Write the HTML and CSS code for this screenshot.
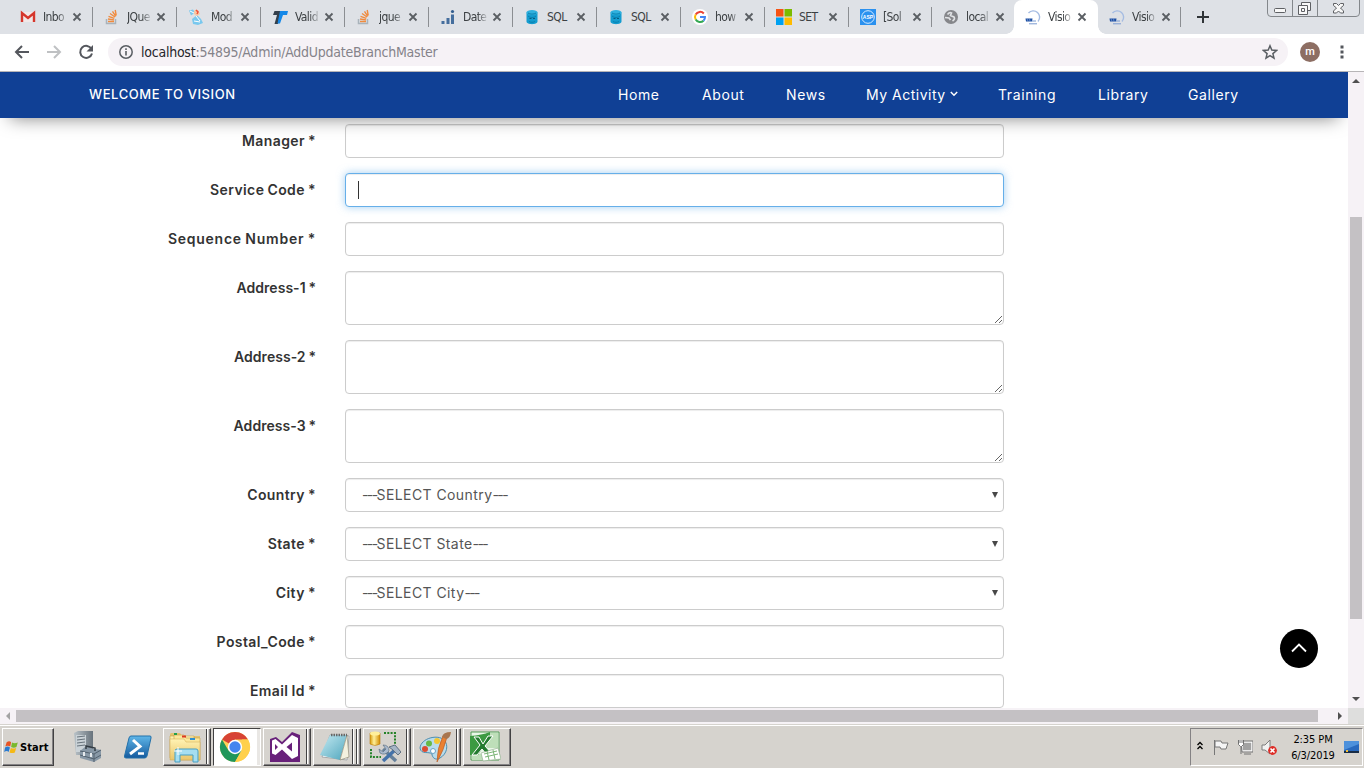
FILE: index.html
```
<!DOCTYPE html>
<html lang="en">
<head>
<meta charset="utf-8">
<title>Vision</title>
<link rel="stylesheet" href="styles.css">
</head>
<body>
<svg class="defs" aria-hidden="true">
  <defs>
    <linearGradient id="sky" x1="0" y1="0" x2="0" y2="1"><stop offset="0" stop-color="#5fb6e8"/><stop offset="1" stop-color="#145a9e"/></linearGradient>
    <linearGradient id="paper" x1="0" y1="0" x2="1" y2="1"><stop offset="0" stop-color="#c5eaf2"/><stop offset="1" stop-color="#4fa6bd"/></linearGradient>
    <linearGradient id="folder" x1="0" y1="0" x2="0" y2="1"><stop offset="0" stop-color="#fff3b4"/><stop offset="1" stop-color="#e9c56a"/></linearGradient>
    <linearGradient id="gold" x1="0" y1="0" x2="1" y2="0"><stop offset="0" stop-color="#d79a09"/><stop offset=".4" stop-color="#fff09a"/><stop offset="1" stop-color="#d38d00"/></linearGradient>
    <linearGradient id="metal" x1="0" y1="0" x2="1" y2="0"><stop offset="0" stop-color="#b9c2c8"/><stop offset="1" stop-color="#68737c"/></linearGradient>
  </defs>
  <symbol id="x" viewBox="0 0 10 10"><path d="M1.500 1.500l7 7m0-7l-7 7" stroke="#5a5e63" stroke-width="1.800" fill="none"/></symbol>
  <symbol id="stack" viewBox="0 0 16 16"><path d="M2.500 10v4.500h9V10" fill="none" stroke="#a9b3bb" stroke-width="1.500"/><path d="M4 12.500h6M4 10l6 .9M4.500 7.300l5.800 2M6 4.500l5 3.500M8.500 2.300l3.300 5M11.200 1l1 5.500" stroke="#f08b3e" stroke-width="1.400" fill="none"/></symbol>
  <symbol id="db" viewBox="0 0 16 16"><path d="M2.500 3.500v9c0 3.500 11 3.500 11 0v-9z" fill="#149ccf"/><ellipse cx="8" cy="3.500" rx="5.500" ry="2.600" fill="#2fb0de"/><path d="M4 4c2 1.500 6 1.500 8 0M4 7c2 2 6 2 8 0M5 12.500c2 1 4 1 6 0" stroke="#087fae" fill="none"/><path d="M5.500 9.500h2m1.500 0h2" stroke="#065a80"/></symbol>
  <symbol id="vision" viewBox="0 0 16 16"><path d="M3.500 4A6.300 6.300 0 1 1 13 12.500" fill="none" stroke="#a5bce2" stroke-width="1.400"/><path d="M.5 9.500h7l-.5 3H1z" fill="#1c4fa3"/><path d="M2 9.500l1 3m1.500-3l.5 3" stroke="#94aedb" stroke-width=".6"/><path d="M7 12h4M4 14.800h8" stroke="#7b9bd1"/></symbol>
</svg>

<header class="tabstrip">
  <div class="tab"><svg class="fav" viewBox="0 0 16 16"><path d="M1 3h14v10H1z" fill="#f1e8e8"/><path d="M2 13V4l6 5 6-5v9" fill="none" stroke="#d5362c" stroke-width="2.400"/></svg><span class="tab-title">Inbo</span><svg class="close"><use href="#x"/></svg></div>
  <div class="tab"><svg class="fav"><use href="#stack"/></svg><span class="tab-title">JQue</span><svg class="close"><use href="#x"/></svg></div>
  <div class="tab"><svg class="fav" viewBox="0 0 16 16"><path d="M1 1.500l4-1 2 3-4 3zM4 10l5-4 4 4 2 4-5 2-5-1z" fill="#79c8ee"/><path d="M2 2l4 2M6 12l6 1M8 7l4 5" stroke="#fff"/><path d="M6 3c0-3 5-3 5 0l1 2-3 2-3-2z" fill="#f8c8a2"/><path d="M8 1l2 2-1 2" stroke="#ed513f" stroke-width="1.500" fill="none"/></svg><span class="tab-title">Mod</span><svg class="close"><use href="#x"/></svg></div>
  <div class="tab"><svg class="fav" viewBox="0 0 16 16"><path d="M2.500 2h7l-3.500 13H2.500L5 6H1z" fill="#333f4b"/><path d="M8 2h8l-1 4h-4l-3 8.500H5.500z" fill="#1588e8"/></svg><span class="tab-title">Valid</span><svg class="close"><use href="#x"/></svg></div>
  <div class="tab"><svg class="fav"><use href="#stack"/></svg><span class="tab-title">jque</span><svg class="close"><use href="#x"/></svg></div>
  <div class="tab"><svg class="fav" viewBox="0 0 16 16"><path d="M1.500 12h3v3h-3zM6.500 9h3v6h-3zM11 5.500h3V15h-3z" fill="#456e9d"/><circle cx="12.500" cy="2.500" r="1.600" fill="#315c8e"/></svg><span class="tab-title">Date</span><svg class="close"><use href="#x"/></svg></div>
  <div class="tab"><svg class="fav"><use href="#db"/></svg><span class="tab-title solid">SQL</span><svg class="close"><use href="#x"/></svg></div>
  <div class="tab"><svg class="fav"><use href="#db"/></svg><span class="tab-title solid">SQL</span><svg class="close"><use href="#x"/></svg></div>
  <div class="tab"><svg class="fav" viewBox="0 0 16 16"><circle cx="8" cy="8" r="8" fill="#fff"/><g fill="none" stroke-width="2"><path d="M11.800 4.500A5 5 0 0 0 3.700 5.500" stroke="#ea4335"/><path d="M3.700 5.500a5 5 0 0 0 0 5" stroke="#fbbc05"/><path d="M3.700 10.500a5 5 0 0 0 7.800 1.200" stroke="#34a853"/><path d="M11.500 11.700A5 5 0 0 0 13 8H8" stroke="#4285f4"/></g></svg><span class="tab-title">how</span><svg class="close"><use href="#x"/></svg></div>
  <div class="tab"><svg class="fav" viewBox="0 0 16 16"><path d="M0 0h7.500v7.500H0z" fill="#f65314"/><path d="M8.500 0H16v7.500H8.500z" fill="#7cbb00"/><path d="M0 8.500h7.500V16H0z" fill="#00a1f1"/><path d="M8.500 8.500H16V16H8.500z" fill="#ffbb00"/></svg><span class="tab-title solid">SET</span><svg class="close"><use href="#x"/></svg></div>
  <div class="tab w83"><svg class="fav" viewBox="0 0 16 16"><path d="M0 0h16v16H0z" fill="#2b91ef"/><circle cx="8" cy="8" r="6.300" fill="none" stroke="#d8ecff"/><text x="8" y="10" class="asp">ASP</text></svg><span class="tab-title">[Sol</span><svg class="close"><use href="#x"/></svg></div>
  <div class="tab w82"><svg class="fav" viewBox="0 0 16 16"><circle cx="8" cy="8" r="7" fill="#85868a"/><path d="M4.500 5.500q2-2.500 4-1.500l-1 2.500 3.500 1.500q1.500 2-1.500 4M2 8.500l4 .5 1.500 2" fill="none" stroke="#e0e2e5" stroke-width="1.700"/></svg><span class="tab-title">local</span><svg class="close"><use href="#x"/></svg></div>
  <div class="tab active"><svg class="fav"><use href="#vision"/></svg><span class="tab-title">Visio</span><svg class="close"><use href="#x"/></svg></div>
  <div class="tab w83"><svg class="fav"><use href="#vision"/></svg><span class="tab-title">Visio</span><svg class="close"><use href="#x"/></svg></div>
  <svg class="plus" viewBox="0 0 12 12"><path d="M6 0v12M0 6h12" stroke="#303438" stroke-width="2"/></svg>
  <svg class="window-buttons" viewBox="0 0 94 17"><path d="M.5 0v13q0 3.500 3.500 3.500h85q3.500 0 3.500-3.500V0M25.500 0v16M50.500 0v16" fill="none" stroke="#83878b"/><g fill="#f8f8f8" stroke="#5e6064"><rect x="7.500" y="8.500" width="11" height="4" rx="1"/><path d="M34.500 2.500h9v8h-9z"/><path d="M31.500 5.500h9v9h-9zM34.500 8.500h3v3h-3z"/><path d="M66.500 3.500h3l2 2 2-2h3v2l-3 2.500 3 3v2h-3l-2-2-2 2h-3v-2l3-3-3-2.500z"/></g></svg>
</header>

<div class="toolbar">
  <svg class="tool" viewBox="0 0 16 16"><path d="M15 8H2m6-6L2 8l6 6" stroke="#54575d" stroke-width="2" fill="none"/></svg>
  <svg class="tool" viewBox="0 0 16 16"><path d="M1 8h13M8 2l6 6-6 6" stroke="#bfc1c3" stroke-width="2" fill="none"/></svg>
  <svg class="tool" viewBox="0 0 16 16"><path d="M13.500 5A6 6 0 1 0 14 9.500" stroke="#54575d" stroke-width="2" fill="none"/><path d="M15 1v6.500H8.500z" fill="#54575d"/></svg>
  <div class="omnibox">
    <svg class="info" viewBox="0 0 14 14"><circle cx="7" cy="7" r="6.200" fill="none" stroke="#5a5e63" stroke-width="1.500"/><path d="M7 6v4.500M7 3.300v1.700" stroke="#5a5e63" stroke-width="1.600"/></svg>
    <span class="url"><b>localhost</b>:54895/Admin/AddUpdateBranchMaster</span>
    <svg class="star" viewBox="0 0 16 16"><path d="M8 1.800l1.800 4.300 4.700.4-3.600 3.100 1.100 4.600-4-2.500-4 2.500 1.100-4.600-3.600-3.100 4.700-.4z" fill="none" stroke="#5a5e63" stroke-width="1.500"/></svg>
  </div>
  <div class="avatar">m</div>
  <svg class="dots" viewBox="0 0 4 14"><path d="M.5.5h3v3h-3zM.5 5.500h3v3h-3zM.5 10.500h3v3h-3z" fill="#54575d"/></svg>
</div>

<div class="view">
  <div class="page">
    <nav class="nav">
      <span class="brand">WELCOME TO VISION</span>
      <a class="home">Home</a><a class="about">About</a><a class="news">News</a><a class="activity">My Activity</a><svg class="caret" viewBox="0 0 8 6"><path d="M.8 1L4 4.200 7.200 1" stroke="#fff" stroke-width="1.500" fill="none"/></svg><a class="training">Training</a><a class="library">Library</a><a class="gallery">Gallery</a>
    </nav>
    <form class="form">
      <label>Manager *</label><input class="control">
      <label>Service Code *</label><div class="control focused"><i class="cursor"></i></div>
      <label class="wide">Sequence Number *</label><input class="control">
      <label class="narrow">Address-1 *</label><textarea class="control tall"></textarea>
      <label class="narrow">Address-2 *</label><textarea class="control tall"></textarea>
      <label class="narrow">Address-3 *</label><textarea class="control tall"></textarea>
      <label>Country *</label><div class="control select"><span><i class="dash">---</i>SELECT Country<i class="dash">---</i></span><i class="arrow"></i></div>
      <label>State *</label><div class="control select"><span><i class="dash">---</i>SELECT State<i class="dash">---</i></span><i class="arrow"></i></div>
      <label>City *</label><div class="control select"><span><i class="dash">---</i>SELECT City<i class="dash">---</i></span><i class="arrow"></i></div>
      <label>Postal_Code *</label><input class="control">
      <label>Email Id *</label><input class="control">
    </form>
    <div class="to-top"><svg viewBox="0 0 16 10"><path d="M1 8.500l7-7 7 7" stroke="#fff" stroke-width="1.800" fill="none"/></svg></div>
  </div>
  <div class="vscroll"><svg viewBox="0 0 8 4"><path d="M0 4l4-4 4 4z" fill="#505050"/></svg><div class="vthumb"></div><svg viewBox="0 0 8 4"><path d="M0 0l4 4 4-4z" fill="#505050"/></svg></div>
  <div class="hscroll"><svg viewBox="0 0 4 8"><path d="M4 0L0 4l4 4z" fill="#a3a3a3"/></svg><div class="hthumb"></div><svg viewBox="0 0 4 8"><path d="M0 0l4 4-4 4z" fill="#505050"/></svg></div>
  <div class="corner"></div>
</div>

<footer class="taskbar">
  <div class="start raised"><svg viewBox="0 0 18 16"><path d="M3 2q3-2 5 0L7 7Q4 5 1.500 7z" fill="#e85424"/><path d="M9 2.500q3 1.500 6.500-.2L14 7.500q-3 1.500-6 0z" fill="#79b82d"/><path d="M1.200 8q3-2 5.500 0l-1.500 5q-2-2-5 0z" fill="#2a7bd0"/><path d="M7.700 8.500q3 1.500 6 0l-1.500 5q-3 1.500-6 0z" fill="#f5b916"/></svg><span>Start</span></div>
  <div class="pin server"><svg viewBox="0 0 30 32"><path d="M1 2l4-2h15v21l-4 3H3z" fill="url(#metal)"/><path d="M3 4h10v17H3z" fill="#cad2d7"/><path d="M4 6l8-1M4 9l8-1M4 12l8-1M4 15l8-1" stroke="#66717a"/><path d="M7 20l5-4 16 3v8l-7 4-14-4z" fill="#8898a6"/><path d="M7 20l14 3 7-4M21 23v8M7 24l14 4 7-4" stroke="#52616e" fill="none"/><path d="M13 18v-3l9 2v3" fill="none" stroke="#333c44" stroke-width="1.500"/><path d="M11 21v4m7-3v4" stroke="#e6eaed" stroke-width="2"/></svg></div>
  <div class="pin shell"><svg viewBox="0 0 28 24"><path d="M7 1h19q1.500 0 1 2l-4 18q-.5 2-2.500 2H2q-2 0-1.500-2L5 3q.5-2 2-2z" fill="url(#sky)" stroke="#2370a9"/><path d="M9 5l7 6.500L6 19" fill="none" stroke="#fff" stroke-width="3"/><path d="M14 18.500h6" stroke="#fff" stroke-width="2.500"/></svg></div>
  <div class="task raised stacked"><svg viewBox="0 0 32 32"><path d="M1 3l1-1h9l2 3h18v24H1z" fill="#e3c270"/><path d="M1 5h24v22H1z" fill="url(#folder)" stroke="#c79d48" stroke-width=".6"/><path d="M5 4h10l2 3h14v22H5z" fill="#fbe79b" stroke="#c79d48" stroke-width=".6"/><path d="M1 8h14l2 3h14v18H1z" fill="url(#folder)" stroke="#cfa650" stroke-width=".5"/><path d="M5 3h3" stroke="#22a04a" stroke-width="2"/><path d="M13 5.500h4" stroke="#dd3722" stroke-width="2"/><path d="M21 8h5" stroke="#318fce" stroke-width="2"/><path d="M6 31V20q0-2 2-2h19q2 0 2 2v11h-5v-7H11v7z" fill="#a5def1" stroke="#469fc2"/><path d="M9 16v8m-4-4h8" stroke="#fff"/></svg></div>
  <div class="task pressed"><svg viewBox="0 0 32 32"><circle cx="16" cy="16" r="15" fill="#fdd056"/><path d="M16 16L3 8.500A15 15 0 0 1 29 8.500H16z" fill="#d74335"/><path d="M3 8.500A15 15 0 0 0 16 31l6.500-11.500H9.500z" fill="#20975a"/><path d="M29 8.500A15 15 0 0 1 16 31l7-12V8.500z" fill="#ffd04b"/><circle cx="16" cy="16" r="7.200" fill="#fff"/><circle cx="16" cy="16" r="5.700" fill="#4385ef"/></svg></div>
  <div class="task raised stacked"><svg viewBox="0 0 32 32"><path d="M1 8l6-2 6 5L23 1l8 3v27H1z" fill="#68217a"/><path d="M3 9.500L6.500 8l6.500 5.500L23 4l6 3v18l-6 3-10-9.500L6.500 24 3 22.500zM6 13v6l3-3zM23 11.500L17.500 16l5.500 4.500z" fill="#fff" fill-rule="evenodd"/></svg></div>
  <div class="task raised stacked three"><svg viewBox="0 0 32 32"><path d="M11 4l19 1-2 24-25-3z" fill="#fff" stroke="#a4a9aa"/><path d="M11 4h17l-7 25L1 24z" fill="url(#paper)"/><path d="M28 4l2 22-9 3z" fill="#f3f1df" stroke="#918d78" stroke-width=".7"/><path d="M12 4h16" stroke="#666" stroke-width="2.500" stroke-dasharray="1.500 1"/></svg></div>
  <div class="task raised stacked"><svg viewBox="0 0 32 32"><path d="M1 2v11q5 3 10 0V2z" fill="url(#gold)" stroke="#b87b0d" stroke-width=".6"/><ellipse cx="6" cy="2.500" rx="5" ry="2" fill="#ffef9a"/><path d="M15 2h11v11M2 18v8h10" fill="none" stroke="#258329" stroke-width="2" stroke-dasharray="2 1.300"/><path d="M14 18l13 12" stroke="#66809a" stroke-width="3.500"/><path d="M10 18l4 3 3-3-3-4q6 0 6 6-4 5-9 2z" fill="#aabbd0" stroke="#607183" stroke-width=".7"/><path d="M27 18L14 30" stroke="#4472a9" stroke-width="3.500"/><path d="M20 16l6-2 6 7-3 3-5-5z" fill="#a6b5c5" stroke="#607183"/></svg></div>
  <div class="task raised stacked"><svg viewBox="0 0 32 32"><path d="M1 17C2 7 19 3 25 9c5 5 3 14-4 18-5 3-8-1-8-4-3-3-11 1-12-6z" fill="#b9dceb" stroke="#4b8eb1"/><circle cx="6" cy="18" r="3" fill="#db4c32"/><circle cx="10" cy="12.500" r="3" fill="#66b948"/><circle cx="18" cy="10" r="3" fill="#f3c733"/><circle cx="14" cy="20" r="2.500" fill="#fff" stroke="#6aa1c3"/><path d="M28 6q-3 13-10 25 0-14 6-26z" fill="#e98032" stroke="#b15621" stroke-width=".6"/><path d="M23 6q1-5 9-5-1 7-5 7z" fill="#a8754e"/></svg></div>
  <div class="task raised"><svg viewBox="0 0 32 32"><path d="M2 1h28v28H2z" fill="#eaf6e8" stroke="#519b54"/><path d="M17 2h12v15H17zM3 23h13v6H3z" fill="#bedfb9"/><path d="M1 5q12-1 20-4v5L9 24H1z" fill="#3c9a42"/><path d="M5 6h5l4 7 5-8h5l-8 10 8 9h-6l-5-6-5 6H3l8-10z" fill="#247b30" stroke="#fff"/><path d="M12 22l17-5 3 11-18 2z" fill="#fff" stroke="#92b28e" stroke-width=".7"/><path d="M15 23l13-3M16 26l13-3M18 20l2 9M24 19l2 9" stroke="#7db678"/></svg></div>
  <div class="tray">
    <svg class="chev" viewBox="0 0 6 9"><path d="M.5 4L3 1.500 5.500 4M.5 8L3 5.500 5.500 8" fill="none" stroke="#000" stroke-width="1.300"/></svg>
    <svg class="status" viewBox="0 0 16 16"><path d="M1.500 1v15M2 2h6l1 2h6l-2 6H8L7 8H2z" fill="#f5f5f5" stroke="#777"/></svg>
    <svg class="status" viewBox="0 0 16 16"><path d="M5 3h10v9H5z" fill="#a2a2a2" stroke="#fff" stroke-width="1.500"/><path d="M4 2h12v11H5zM7 15h7M4 8v7" fill="none" stroke="#727272"/><path d="M1.500 1v4.500l2 2h1l2-2V1M3 1v3m2-3v3" fill="#fff" stroke="#727272"/></svg>
    <svg class="status" viewBox="0 0 16 16"><path d="M1 6h3l5-5v14l-5-4H1z" fill="#f1f1f1" stroke="#7d7d7d"/><circle cx="11.500" cy="11.500" r="4.400" fill="#dd2e28"/><path d="M9.500 9.500l4 4m0-4l-4 4" stroke="#fff" stroke-width="1.600"/></svg>
    <div class="clock"><span>2:35 PM</span><span class="date">6/3/2019</span></div>
    <svg class="desk" viewBox="0 0 16 13"><path d="M0 0h15v11H0z" fill="#2869be"/><path d="M0 0h15v3L0 9z" fill="#4d91dc"/><path d="M0 10h15v2H0z" fill="#182c45"/><path d="M2 9h2v2H2z" fill="#f1bf38"/></svg>
  </div>
</footer>
</body>
</html>
```
FILE: styles.css
```
* { box-sizing: border-box; }
body { margin: 0; width: 1364px; height: 768px; overflow: hidden; background: #fff; display: flex; flex-direction: column; font-family: Inter, sans-serif; }
svg { display: block; flex: none; }
.defs { position: absolute; width: 0; height: 0; }

.tabstrip { height: 34px; background: #dee1e6; display: flex; align-items: center; padding-left: 9px; flex: none; font: 12px "DejaVu Sans Condensed", "DejaVu Sans", sans-serif; font-stretch: condensed; color: #3c4043; }
.tab { width: 84px; height: 34px; flex: none; display: flex; align-items: center; padding-left: 11px; background: linear-gradient(#8b8e92, #8b8e92) right 0 top 7px / 1px 20px no-repeat; }
.w83 { width: 83px; }
.w82 { width: 82px; background: none; }
.active { background: #fff; border-radius: 8px 8px 0 0; position: relative; }
.active::before, .active::after { content: ""; position: absolute; bottom: 0; width: 8px; height: 8px; }
.active::before { left: -8px; background: radial-gradient(circle at 0 0, transparent 7.5px, #fff 8px); }
.active::after { right: -8px; background: radial-gradient(circle at 100% 0, transparent 7.5px, #fff 8px); }
.fav { width: 16px; height: 16px; }
.asp { font: bold 5px "Liberation Sans", sans-serif; fill: #fff; text-anchor: middle; }
.tab-title { width: 24px; margin-left: 7px; white-space: nowrap; letter-spacing: -.6px; line-height: 18px; -webkit-mask-image: linear-gradient(90deg, #000 60%, rgba(0,0,0,.15)); mask-image: linear-gradient(90deg, #000 60%, rgba(0,0,0,.15)); }
.solid { -webkit-mask-image: none; mask-image: none; }
.close { width: 10px; height: 10px; margin-left: 5px; }
.plus { width: 12px; height: 12px; margin-left: 16px; }
.window-buttons { width: 94px; height: 17px; margin-left: 58px; align-self: flex-start; }

.toolbar { height: 38px; flex: none; display: flex; align-items: center; padding: 0 0 2px 14px; border-bottom: 1px solid #b7b5b7; }
.tool { width: 16px; height: 16px; margin-right: 16px; }
.omnibox { width: 1180px; height: 28px; margin-left: -2px; border-radius: 14px; background: #f6f2f6; display: flex; align-items: center; padding: 0 10px 0 11px; }
.info { width: 14px; height: 14px; }
.url { margin-left: 8px; font: 14px "DejaVu Sans Condensed", "DejaVu Sans", sans-serif; font-stretch: condensed; color: #85838a; letter-spacing: -.24px; }
.url b { font-weight: 400; color: #25262a; }
.star { width: 16px; height: 16px; margin-left: auto; }
.avatar { width: 20px; height: 20px; margin-left: 12px; border-radius: 50%; background: #8d6e63; color: #fff; font: 500 11px/19px Roboto, sans-serif; text-align: center; }
.dots { width: 4px; height: 14px; margin-left: 20px; }

.view { height: 652px; flex: none; display: grid; grid-template: 636px 16px / 1348px 16px; }
.page { overflow: hidden; position: relative; }
.nav { height: 46px; background: #104095; color: #fff; display: flex; align-items: center; padding: 0 0 2px 89px; position: relative; z-index: 1; box-shadow: 0 10px 18px -10px rgba(0,0,0,.5); font-size: 14px; }
.nav a, .brand { white-space: nowrap; flex: none; }
.brand { width: 529px; font-size: 13px; font-weight: 500; letter-spacing: .6px; }
.home { width: 84px; } .about { width: 84px; } .news { width: 80px; } .activity { width: 84px; } .training { width: 100px; } .library { width: 90px; }
.nav a { letter-spacing: .6px; }
.nav .activity { letter-spacing: .5px; }
.caret { width: 8px; height: 6px; margin-right: 40px; }

.form { display: grid; grid-template-columns: 315px 659px; column-gap: 30px; row-gap: 15px; padding-top: 6px; margin: 0; }
.form label { text-align: right; font-size: 14px; line-height: 20px; padding-top: 7px; margin-right: -1px; font-weight: 600; color: #333; letter-spacing: .4px; word-spacing: -.8px; white-space: nowrap; }
.form .wide { letter-spacing: .75px; }
.form .narrow { letter-spacing: .04px; }
.control { width: 659px; height: 34px; border: 1px solid #ccc; border-radius: 4px; background: #fff; box-shadow: inset 0 1px 1px rgba(0,0,0,.075); display: block; margin: 0; outline: 0; }
.tall { height: 54px; resize: vertical; }
.focused { border-color: #66afe9; box-shadow: inset 0 1px 1px rgba(0,0,0,.075), 0 0 8px rgba(102,175,233,.6); padding: 7px 12px; }
.cursor { display: block; width: 1px; height: 18px; background: #333; }
.select { display: flex; align-items: center; justify-content: space-between; padding: 0 5px 0 16px; color: #555; font-size: 14px; letter-spacing: .42px; }
.select span { padding-bottom: 2px; }
.dash { font-style: normal; letter-spacing: -1.6px; }
.arrow { border: 3px solid transparent; border-top: 6px solid #484848; border-bottom: 0; }
.to-top { position: absolute; left: 1280px; top: 557px; width: 38px; height: 39px; border-radius: 50%; background: #000; display: flex; justify-content: center; padding-top: 14px; }
.to-top svg { width: 16px; height: 10px; }

.vscroll { background: #f6f2f6; display: flex; flex-direction: column; align-items: center; padding: 7px 0; }
.vscroll svg { width: 8px; height: 4px; }
.vthumb { width: 12px; height: 402px; margin: 134px 0 78px; background: #c4c1c4; }
.hscroll { background: #f6f2f6; display: flex; align-items: center; padding-left: 6px; }
.hscroll svg { width: 4px; height: 8px; }
.hthumb { width: 1302px; height: 12px; margin: 0 20px 0 6px; background: #c4c1c4; }
.corner { background: #dededd; }

.taskbar { height: 44px; flex: none; background: #d6d3ce; border-top: 1px solid #d6d3ce; box-shadow: inset 0 1px #fff; display: flex; align-items: flex-start; padding: 3px 0 0 2px; font-family: "DejaVu Sans Condensed", "DejaVu Sans", sans-serif; font-stretch: condensed; }
.raised { border: 1px solid; border-color: #fff #424142 #424142 #fff; box-shadow: inset -1px -1px #848284; }
.start { width: 52px; height: 38px; display: flex; align-items: center; color: #000; font-size: 11px; font-weight: 700; letter-spacing: .1px; padding-left: 1px; }
.start svg { width: 16px; height: 15px; }
.pin { height: 38px; width: 50px; display: flex; align-items: center; justify-content: center; }
.server { margin-left: 9px; }
.server svg { width: 30px; height: 32px; }
.shell svg { width: 28px; height: 24px; }
.task { width: 48px; height: 38px; margin-right: 2px; display: flex; align-items: center; padding-left: 5px; }
.task svg { width: 32px; height: 32px; }
.stacked { width: 48px; background: linear-gradient(#424142, #424142) 42px 0 / 1px 100% no-repeat, linear-gradient(#fff, #fff) 43px 0 / 1px 100% no-repeat; }
.three { background: linear-gradient(#424142, #424142) 38px 0 / 1px 100% no-repeat, linear-gradient(#fff, #fff) 39px 0 / 1px 100% no-repeat, linear-gradient(#424142, #424142) 42px 0 / 1px 100% no-repeat, linear-gradient(#fff, #fff) 43px 0 / 1px 100% no-repeat; }
.pressed { background: linear-gradient(#fff, #fff) 0 0 / 43px 100% no-repeat, #e9e7e4; border: 1px solid; border-color: #424142 #fff #fff #424142; }
.tray { width: 173px; height: 38px; margin-left: auto; margin-right: 1px; border: 1px solid; border-color: #848284 #fff #fff #848284; display: flex; align-items: center; padding-left: 6px; }
.chev { width: 6px; height: 9px; margin: 0 10px 4px 0; }
.status { width: 16px; height: 16px; margin-right: 8px; }
.clock { width: 48px; margin-left: 4px; padding-top: 2px; display: flex; flex-direction: column; align-items: center; font-size: 11px; line-height: 16px; white-space: nowrap; letter-spacing: -.1px; }
.desk { width: 16px; height: 13px; margin-left: 7px; }
```
